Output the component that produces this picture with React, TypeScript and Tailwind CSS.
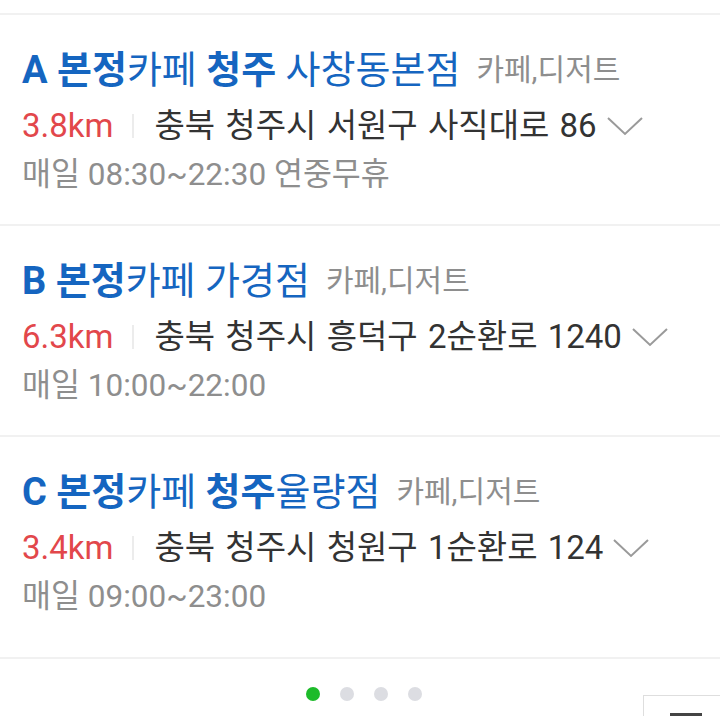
import { Fragment } from 'react'

type Store = {
  letter: string
  name: { text: string; bold?: boolean }[]
  category: string
  distance: string
  address: string
  hours: string
}

const stores: Store[] = [
  {
    letter: 'A',
    name: [
      { text: '본정', bold: true },
      { text: '카페 ' },
      { text: '청주', bold: true },
      { text: ' 사창동본점' },
    ],
    category: '카페,디저트',
    distance: '3.8km',
    address: '충북 청주시 서원구 사직대로 86',
    hours: '매일 08:30~22:30 연중무휴',
  },
  {
    letter: 'B',
    name: [{ text: '본정', bold: true }, { text: '카페 가경점' }],
    category: '카페,디저트',
    distance: '6.3km',
    address: '충북 청주시 흥덕구 2순환로 1240',
    hours: '매일 10:00~22:00',
  },
  {
    letter: 'C',
    name: [
      { text: '본정', bold: true },
      { text: '카페 ' },
      { text: '청주', bold: true },
      { text: '율량점' },
    ],
    category: '카페,디저트',
    distance: '3.4km',
    address: '충북 청주시 청원구 1순환로 124',
    hours: '매일 09:00~23:00',
  },
]

function Chevron() {
  return (
    <svg width="36" height="19" viewBox="0 0 36 19" className="ml-[10px] shrink-0">
      <polyline points="1,1 18,17 35,1" fill="none" stroke="#9a9a9a" strokeWidth="2" />
    </svg>
  )
}

function StoreItem({ store, last }: { store: Store; last: boolean }) {
  return (
    <div
      className={`border-b-2 border-[#f1f1f1] pl-[22px] pt-[35px] ${last ? 'pb-[40px]' : 'pb-[29px]'}`}
    >
      <div className="flex items-center leading-[40px] whitespace-nowrap">
        <span className="text-[38px] text-[#1565c0]">
          <span className="font-bold">{store.letter} </span>
          {store.name.map((part, i) => (
            <Fragment key={i}>
              <span className={part.bold ? 'font-bold' : ''}>{part.text}</span>
            </Fragment>
          ))}
        </span>
        <span className="ml-[16px] text-[30px] text-[#8e8e8e]">{store.category}</span>
      </div>
      <div className="mt-[16px] flex items-center leading-[40px] whitespace-nowrap">
        <span className="text-[33px] text-[#e2474b]">{store.distance}</span>
        <span className="ml-[19px] mr-[20px] h-[24px] w-[2px] bg-[#ececec]" />
        <span className="text-[33px] text-[#333333] [word-spacing:2px]">{store.address}</span>
        <Chevron />
      </div>
      <div className="mt-[9px] leading-[40px] text-[31.5px] text-[#8e8e8e] whitespace-nowrap">
        {store.hours}
      </div>
    </div>
  )
}

export default function App() {
  return (
    <div className="relative h-[716px] w-[720px] overflow-hidden bg-white font-['Roboto','Noto_Sans_CJK_KR',sans-serif]">
      <div className="h-[15px] border-b-2 border-[#f1f1f1]" />
      {stores.map((store, i) => (
        <StoreItem key={store.letter} store={store} last={i === stores.length - 1} />
      ))}
      <div className="mt-[28px] flex justify-center gap-[20px] pl-[8px]">
        <span className="h-[14px] w-[14px] rounded-full bg-[#1dbb2a]" />
        <span className="h-[14px] w-[14px] rounded-full bg-[#dcdde2]" />
        <span className="h-[14px] w-[14px] rounded-full bg-[#dcdde2]" />
        <span className="h-[14px] w-[14px] rounded-full bg-[#dcdde2]" />
      </div>
      <div className="absolute left-[643px] top-[695px] h-[60px] w-[90px] border border-[#dedede] bg-white">
        <div className="ml-[26px] mt-[17px] h-[3px] w-[32px] bg-[#444]" />
      </div>
    </div>
  )
}
